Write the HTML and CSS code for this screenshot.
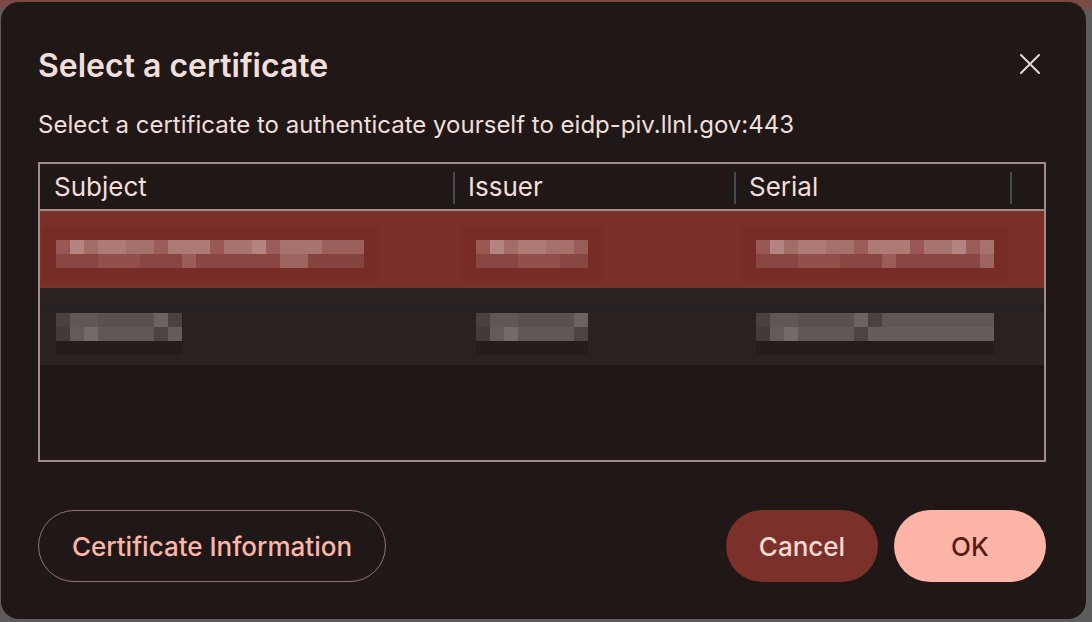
FILE: index.html
```html
<!DOCTYPE html>
<html lang="en">
<head>
    <meta charset="UTF-8">
    <meta name="viewport" content="width=device-width, initial-scale=1.0">
    <title>Select a certificate</title>
    <link rel="stylesheet" href="styles.css">
</head>
<body>
    <div class="dialog">
        <div class="dialog-header">
            <h1>Select a certificate</h1>
            <button class="close-button" aria-label="Close">
                <svg width="20" height="20" viewBox="0 0 20 20">
                    <path d="M1 1 L19 19 M19 1 L1 19" stroke="#e8d6d3" stroke-width="2" stroke-linecap="round"/>
                </svg>
            </button>
        </div>

        <p class="dialog-message">Select a certificate to authenticate yourself to eidp-piv.llnl.gov:443</p>

        <div class="cert-table">
            <div class="cert-head">
                <div class="cell col-subject">Subject</div>
                <div class="cell col-issuer">Issuer</div>
                <div class="cell col-serial">Serial</div>
                <div class="cell col-end"></div>
            </div>

            <!-- row text is blurred in the screenshot -->
            <div class="cert-row selected">
                <div class="cell col-subject"><span class="blur blur-subject-1"></span></div>
                <div class="cell col-issuer"><span class="blur blur-issuer"></span></div>
                <div class="cell col-serial"><span class="blur blur-serial"></span></div>
                <div class="cell col-end"></div>
            </div>
            <div class="cert-row">
                <div class="cell col-subject"><span class="blur blur-subject-2"></span></div>
                <div class="cell col-issuer"><span class="blur blur-issuer"></span></div>
                <div class="cell col-serial"><span class="blur blur-serial"></span></div>
                <div class="cell col-end"></div>
            </div>
        </div>

        <div class="dialog-footer">
            <button class="btn btn-outline">Certificate Information</button>
            <div class="footer-right">
                <button class="btn btn-tonal">Cancel</button>
                <button class="btn btn-filled">OK</button>
            </div>
        </div>
    </div>
</body>
</html>
```

FILE: styles.css
```css
* {
    margin: 0;
    padding: 0;
    box-sizing: border-box;
}

body {
    font-family: Inter, "Noto Sans", "Liberation Sans", sans-serif;
    background: linear-gradient(180deg, #7a4a44 0px, #7a4a44 6px, #5e5b5c 12px, #5e5b5c 100%);
    width: 1092px;
    height: 622px;
    overflow: hidden;
}

.dialog {
    width: 1085px;
    height: 617px;
    margin: 2px 0 0 1px;
    background: #201817;
    border-radius: 18px;
    padding: 0 40px 0 37px;
    display: flex;
    flex-direction: column;
    color: #f1dfdc;
}

.dialog-header {
    display: flex;
    align-items: center;
    justify-content: space-between;
    padding-top: 45px;
}

h1 {
    font-size: 32px;
    font-weight: 600;
    line-height: 38px;
}

.close-button {
    background: none;
    border: none;
    width: 20px;
    height: 20px;
    margin-right: 6px;
    margin-top: -4px;
    display: flex;
    cursor: pointer;
}

.dialog-message {
    font-size: 24px;
    line-height: 30px;
    margin-top: 25px;
}

.cert-table {
    margin-top: 22px;
    height: 300px;
    border: 2px solid #a28b88;
}

.cert-head,
.cert-row {
    display: flex;
}

.cert-head {
    height: 47px;
    border-bottom: 2px solid #a28b88;
    font-size: 26px;
}

.cell {
    display: flex;
    align-items: center;
}

.cert-head .cell {
    position: relative;
    padding-left: 14px;
}

.cert-head .cell + .cell {
    padding-left: 15px;
}

.cert-head .cell + .cell::before {
    content: "";
    position: absolute;
    left: 0;
    top: 8px;
    width: 2px;
    height: 32px;
    background: #474b52;
}

.col-subject { width: 413px; }
.col-issuer { width: 281px; }
.col-serial { width: 276px; }
.col-end { flex: 1; }

.cert-row {
    height: 77px;
    background: #2b2322;
}

.cert-row:not(.selected) {
    background: linear-gradient(180deg, #2b2322 0 16px, #252020 16px 23px, #2a2221 23px 66px, #2b2322 66px);
}

.cert-row.selected {
    background: #7a2f28;
}

.cert-row .cell {
    padding-left: 16px;
    padding-top: 9px;
}

.cert-row:not(.selected) .cell {
    padding-top: 0;
}

.cert-row .col-issuer { padding-left: 23px; }
.cert-row .col-serial { padding-left: 22px; }

/* pixelated placeholders standing in for the blurred values */
.blur {
    display: block;
    height: 28px;
}

.selected .blur {
    background:
        linear-gradient(90deg, #995853 0 14px, #b48580 14px 28px, #a26c67 28px 42px, #ad7a75 42px 70px, #a5706b 70px 98px, #9a5d58 98px 112px, #ad7a75 112px 154px, #995853 154px 168px, #a8746f 168px 196px, #b48580 196px 210px, #9a5d58 210px 224px, #a8736e 224px 266px, #9b605b 266px 308px) top / 100% 14px no-repeat,
        linear-gradient(90deg, #8a4641 0 42px, #91504b 42px 84px, #8a4641 84px 126px, #9a5d58 126px 140px, #8a4641 140px 224px, #9e645f 224px 252px, #86433e 252px 308px) bottom / 100% 14px no-repeat;
    box-shadow: 0 0 0 14px #772c26;
}

.cert-row:not(.selected) .blur {
    background:
        linear-gradient(90deg, #4a4241 0 14px, #5e5756 14px 42px, #5a5251 42px 98px, #6b6362 98px 112px, #4a4241 112px 126px, #5e5756 126px 238px, #4e4645 238px 308px) top / 100% 14px no-repeat,
        linear-gradient(90deg, #433b3a 0 14px, #625b5a 14px 28px, #736b6a 28px 42px, #605857 42px 98px, #4c4443 98px 112px, #655d5c 112px 238px, #4e4645 238px 308px) bottom / 100% 14px no-repeat;
    box-shadow: 0 14px 0 0 #241d1c;
}

.blur-subject-1 { width: 308px; }
.blur-subject-2 { width: 126px; }
.blur-issuer { width: 112px; }
.blur-serial { width: 238px; }

.dialog-footer {
    margin-top: auto;
    margin-bottom: 37px;
    display: flex;
    justify-content: space-between;
}

.footer-right {
    display: flex;
    gap: 16px;
}

.btn {
    font-family: inherit;
    height: 72px;
    border-radius: 36px;
    font-size: 26px;
    font-weight: 500;
    cursor: pointer;
}

.btn-outline {
    width: 348px;
    background: transparent;
    border: 1.5px solid #917370;
    color: #ffb4a8;
}

.btn-tonal {
    width: 152px;
    background: #7b3129;
    border: none;
    color: #ffdad4;
}

.btn-filled {
    width: 152px;
    background: #ffb4a8;
    border: none;
    color: #561c14;
}
```
